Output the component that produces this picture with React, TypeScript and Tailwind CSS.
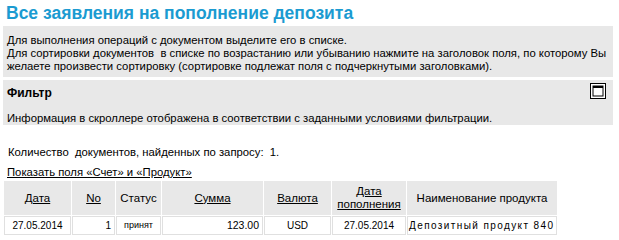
export default function App() {
  const font = { fontFamily: '"Liberation Sans", Arial, sans-serif' };
  return (
    <div className="w-[619px] h-[240px] bg-white text-black overflow-hidden" style={font}>
      <h1 className="pl-[6px] pt-[3px] h-[26px] text-[17.5px] leading-[20px] font-bold text-[#1b9bd1]">
        Все заявления на пополнение депозита
      </h1>
      <div className="mx-[3px] w-[610px] h-[51px] bg-[#e8e8e8] px-[4px] pt-[8px] text-[11.3px] leading-[13px]">
        <p>Для выполнения операций с документом выделите его в списке.</p>
        <p>
          Для сортировки документов&nbsp; в списке по возрастанию или убыванию нажмите на заголовок поля, по которому Вы
          желаете произвести сортировку (сортировке подлежат поля с подчеркнутыми заголовками).
        </p>
      </div>
      <div className="mx-[3px] mt-[3px] w-[610px] h-[45px] bg-[#e8e8e8] px-[4px] pt-[5px] text-[11.3px]">
        <div className="flex items-start justify-between">
          <span className="font-bold text-[12px] leading-[16px]">Фильтр</span>
          <FilterIcon />
        </div>
        <p className="mt-[11px] leading-[13px]">
          Информация в скроллере отображена в соответствии с заданными условиями фильтрации.
        </p>
      </div>
      <p className="mt-[21px] pl-[8px] text-[11.3px] leading-[13px]">
        Количество&nbsp; документов, найденных по запросу:&nbsp; 1.
      </p>
      <a className="block mt-[7px] pl-[7px] text-[11.3px] leading-[13px] underline">
        Показать поля «Счет» и «Продукт»
      </a>
      <table className="ml-[3px] mt-[1px] border-separate border-spacing-[1px] text-[11.5px]">
        <thead>
          <tr className="h-[34px] bg-[#e8e8e8]">
            <Th w="w-[67px]" u>Дата</Th>
            <Th w="w-[43px]" u>No</Th>
            <Th w="w-[45px]">Статус</Th>
            <Th w="w-[101px]" u>Сумма</Th>
            <Th w="w-[67px]" u>Валюта</Th>
            <Th w="w-[74px]" u>
              Дата
              <br />
              пополнения
            </Th>
            <Th w="w-[150px]">Наименование продукта</Th>
          </tr>
        </thead>
        <tbody>
          <tr className="h-[19px] text-[10px]">
            <Td className="text-center">27.05.2014</Td>
            <Td className="text-right">1</Td>
            <Td className="text-center text-[9px]">принят</Td>
            <Td className="text-right text-[10.5px]">123.00</Td>
            <Td className="text-center">USD</Td>
            <Td className="text-center">27.05.2014</Td>
            <Td className="text-left !px-[1px] text-[10px] tracking-[1.4px]">
              Депозитный продукт 840
            </Td>
          </tr>
        </tbody>
      </table>
    </div>
  );
}

function Th({ w, u, children }: { w: string; u?: boolean; children: React.ReactNode }) {
  return (
    <th className={`${w} p-0 font-normal text-center leading-[13px] ${u ? "underline" : ""}`}>
      {children}
    </th>
  );
}

function Td({ className, children }: { className: string; children: React.ReactNode }) {
  return (
    <td className={`border border-[#e0e0e0] px-[3px] py-0 leading-[13px] ${className}`}>
      {children}
    </td>
  );
}

function FilterIcon() {
  return (
    <svg width="16" height="16" viewBox="0 0 16 16" className="mr-[3px] mt-[-2px]">
      <rect x="0.5" y="0.5" width="15" height="15" fill="#fff" stroke="#000" />
      <rect x="3" y="3" width="10" height="10" fill="#fff" stroke="#000" />
      <rect x="3" y="3" width="10" height="2" fill="#000" />
    </svg>
  );
}
